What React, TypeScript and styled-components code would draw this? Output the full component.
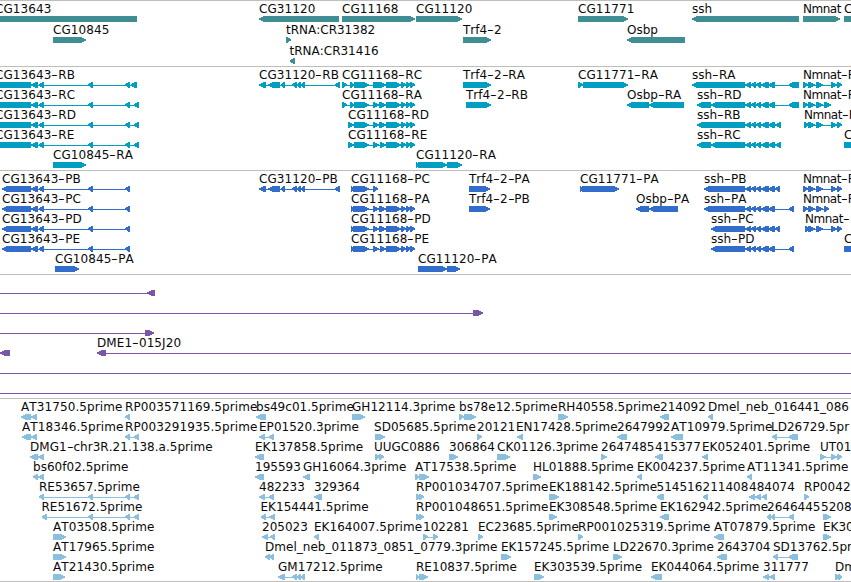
import styled, { createGlobalStyle } from "styled-components";

type Strand = '+' | '-';
type Span = [number, number];

interface Feature {
    label: string;
    strand: Strand;
    exons: Span[];
    labelAt?: number;
    line?: Span;
}

interface TrackData {
    name: string;
    color: string;
    pitch: number;
    gap: number;
    rows: Feature[][];
}

const GlobalStyle = createGlobalStyle`
    body {
        margin: 0;
        background: #fff;
        overflow: hidden;
    }
`

const Browser = styled.main`
    display: flex;
    flex-direction: column;
    width: 851px;
    height: 582px;
    overflow: hidden;
    background: #fff;
    color: #0a0a0a;
    font-family: "DejaVu Sans", sans-serif;
    font-size: 12px;
    line-height: 15px;
    font-kerning: none;
`

const TrackPanel = styled.section<{ $gap: number }>`
    flex: none;
    border-top: 1px solid #bebebe;
    padding-bottom: ${p => p.$gap}px;

    &:last-child {
        border-bottom: 1px solid #bebebe;
    }
`

const Row = styled.div<{ $pitch: number }>`
    position: relative;
    height: ${p => p.$pitch}px;
    padding-top: 15px;
    box-sizing: border-box;
`

const Label = styled.span<{ $spacing: number }>`
    position: absolute;
    top: 1px;
    white-space: pre;
    letter-spacing: ${p => p.$spacing}px;
`

const Hyphen = styled.span`
    display: inline-block;
    width: 6.8px;
    letter-spacing: 0;
    transform: scaleX(1.55);
    transform-origin: left center;
`

const Glyphs = styled.svg<{ $color: string }>`
    display: block;
    width: 851px;
    height: 6px;
    fill: ${p => p.$color};
    shape-rendering: crispEdges;
`

const f = (label: string, strand: Strand, ...exons: Span[]): Feature => ({ label, strand, exons });

// exon groups shared by several isoforms
const tail13643: Span[] = [[31, 38], [38.5, 44], [88, 93], [125, 130]];
const cg31120: Span[] = [[259, 265.5], [268, 280], [280.5, 285], [292, 297], [297, 301], [300.5, 305], [334.5, 340]];
const end11168: Span[] = [[386, 401], [401, 406], [406, 411], [410, 415]];
const sshMid: Span[] = [[745, 751], [751, 756], [756, 761], [761, 769], [768.5, 775]];
const nmnatMid: Span[] = [[808, 815], [816, 823]];
const nmnatEnd: Span[] = [[831, 837], [837, 842]];

const tracks: TrackData[] = [
    {
        name: 'genes',
        color: '#408d94',
        pitch: 21,
        gap: 2,
        rows: [
            [
                f('CG13643', '-', [-5, 137]),
                f('CG31120', '-', [259, 339]),
                f('CG11168', '+', [342, 415]),
                f('CG11120', '+', [416, 462]),
                f('CG11771', '+', [578, 628]),
                f('ssh', '-', [692, 799]),
                f('Nmnat', '+', [803, 840]),
                f('C', '+', [844, 870]),
            ],
            [
                f('CG10845', '+', [53, 86]),
                f('tRNA:CR31382', '+', [286, 291]),
                f('Trf4-2', '+', [463, 491]),
                f('Osbp', '-', [627, 685]),
            ],
            [f('tRNA:CR31416', '-', [289.5, 295])],
        ],
    },
    {
        name: 'transcripts',
        color: '#009fc1',
        pitch: 20,
        gap: 3,
        rows: [
            [
                f('CG13643-RB', '-', [-5, 31], ...tail13643, [130.5, 136.5]),
                f('CG31120-RB', '-', ...cg31120),
                f('CG11168-RC', '+', [342, 347], [350, 354], [354, 369], [373, 386], ...end11168),
                f('Trf4-2-RA', '+', [463, 491]),
                f('CG11771-RA', '+', [578, 583], [583, 628]),
                f('ssh-RA', '-', [692, 745], ...sshMid, [788.5, 799]),
                f('Nmnat-R', '+', [803, 808], ...nmnatMid, ...nmnatEnd),
            ],
            [
                f('CG13643-RC', '-', [-5, 31], ...tail13643, [133.5, 139]),
                f('CG11168-RA', '+', [342, 347], [350, 354], [354, 369], [373, 379], [379, 386], ...end11168),
                f('Trf4-2-RB', '+', [466, 491]),
                f('Osbp-RA', '-', [627, 649], [649, 684]),
                f('ssh-RD', '-', [697, 711], [711, 745], ...sshMid, [788.5, 799]),
                f('Nmnat-R', '+', [803, 808], ...nmnatMid, [824, 831]),
            ],
            [
                f('CG13643-RD', '-', [-5, 31], ...tail13643, [133.5, 139]),
                f('CG11168-RD', '+', [348, 354], [354, 369], [373, 379], [379, 386], ...end11168),
                f('ssh-RB', '-', [697, 745], ...sshMid, [775, 781]),
                f('Nmnat-R', '+', [804, 809], ...nmnatMid, ...nmnatEnd),
            ],
            [
                f('CG13643-RE', '-', [-5, 31], ...tail13643, [133.5, 139]),
                f('CG11168-RE', '+', [348, 354], [354, 369], [373, 379], [380, 386], ...end11168),
                f('ssh-RC', '-', [697, 711], [711, 745], ...sshMid, [775, 781]),
                f('C', '+', [844, 870]),
            ],
            [
                f('CG10845-RA', '+', [53, 86]),
                f('CG11120-RA', '+', [416, 419], [418, 447], [447, 462]),
            ],
        ],
    },
    {
        name: 'translations',
        color: '#326dcc',
        pitch: 20,
        gap: 3,
        rows: [
            [
                f('CG13643-PB', '-', [2, 31], ...tail13643),
                f('CG31120-PB', '-', ...cg31120),
                f('CG11168-PC', '+', [351, 354], [353, 369], [373, 378]),
                f('Trf4-2-PA', '+', [469, 490]),
                f('CG11771-PA', '+', [580, 583], [582, 619]),
                f('ssh-PB', '-', [704, 745], ...sshMid, [775, 780]),
                f('Nmnat-P', '+', [803, 808], ...nmnatMid, ...nmnatEnd),
            ],
            [
                f('CG13643-PC', '-', [2, 31], ...tail13643),
                f('CG11168-PA', '+', [351, 354], [353, 369], [373, 379], [379, 386], ...end11168),
                f('Trf4-2-PB', '+', [469, 490]),
                f('Osbp-PA', '-', [636, 649], [649, 678]),
                f('ssh-PA', '-', [704, 745], ...sshMid, [788.5, 794]),
                f('Nmnat-P', '+', [803, 808], ...nmnatMid, [824, 829]),
            ],
            [
                f('CG13643-PD', '-', [2, 31], ...tail13643),
                f('CG11168-PD', '+', [351, 354], [353, 369], [373, 379], [379, 386], ...end11168),
                f('ssh-PC', '-', [711, 745], ...sshMid, [775, 780]),
                f('Nmnat-', '+', [805, 810], ...nmnatMid, ...nmnatEnd),
            ],
            [
                f('CG13643-PE', '-', [2, 31], ...tail13643),
                f('CG11168-PE', '+', [351, 354], [353, 369], [373, 379], [380, 386], ...end11168),
                f('ssh-PD', '-', [711, 745], ...sshMid, [788.5, 794]),
                f('C', '+', [844, 870]),
            ],
            [
                f('CG10845-PA', '+', [55, 79]),
                f('CG11120-PA', '+', [418, 447], [447, 460]),
            ],
        ],
    },
    {
        name: 'bacs',
        color: '#7858a6',
        pitch: 20,
        gap: 3,
        rows: [
            [{ label: '', strand: '-', exons: [[147, 155]], line: [-10, 150] }],
            [{ label: '', strand: '+', exons: [[473, 483]], line: [-10, 475] }],
            [{ label: '', strand: '+', exons: [[145, 154]], line: [-10, 147] }],
            [
                f('', '-', [0, 10]),
                { label: 'DME1-015J20', strand: '-', exons: [[97, 106]], line: [100, 860] },
            ],
            [{ label: '', strand: '+', exons: [], line: [-10, 860] }],
            [{ label: '', strand: '+', exons: [], line: [-10, 860] }],
        ],
    },
    {
        name: 'ests',
        color: '#8abfdf',
        pitch: 20,
        gap: 2,
        rows: [
            [
                f('AT31750.5prime', '-', [21, 31], [31, 37]),
                f('RP003571169.5prime', '-', [125, 130]),
                f('bs49c01.5prime', '-', [256, 266]),
                f('GH12114.3prime', '+', [352, 364.5]),
                f('bs78e12.5prime', '+', [459, 464], [464, 476]),
                f('RH40558.5prime', '+', [558, 568]),
                f('214092', '-', [660, 669]),
                f('Dmel_neb_016441_086', '-', [708, 713]),
            ],
            [
                f('AT18346.5prime', '-', [22, 31], [31, 37]),
                f('RP003291935.5prime', '-', [125, 130], [133.5, 139]),
                f('EP01520.3prime', '-', [259, 265], [268.5, 274]),
                { ...f('SD05685.5prime', '+', [375, 385]), labelAt: 374 },
                f('20121', '+', [477, 482]),
                { ...f('EN17428.5prime', '-', [517, 523]), labelAt: 516 },
                f('2647992', '-', [617, 627]),
                f('AT10979.5prime', '-', [671, 683]),
                { ...f('LD26729.5pr', '-', [772, 777], [788.5, 798]), labelAt: 771 },
            ],
            [
                f('DMG1-chr3R.21.138.a.5prime', '-', [30, 38], [38, 44]),
                f('EK137858.5prime', '-', [255, 264]),
                { ...f('UUGC0886', '+', [375, 380], [379, 384]), labelAt: 374 },
                f('306864', '+', [449, 458]),
                f('CK01126.3prime', '+', [497, 510]),
                f('2647485', '+', [601, 607]),
                f('415377', '-', [655, 663]),
                f('EK052401.5prime', '-', [702, 708]),
                f('UT01', '+', [820, 826], [831, 837], [837, 842]),
            ],
            [
                f('bs60f02.5prime', '-', [33, 38], [38, 44]),
                f('195593', '-', [255, 264]),
                f('GH16064.3prime', '-', [303, 310]),
                f('AT17538.5prime', '+', [415, 419], [419, 429]),
                f('HL01888.5prime', '+', [533, 541]),
                f('EK004237.5prime', '-', [637, 642]),
                f('AT11341.5prime', '-', [747, 752]),
            ],
            [
                f('RE53657.5prime', '-', [39, 44], [88, 93], [125, 130], [133.5, 139]),
                f('482233', '-', [259, 265], [268.5, 274]),
                f('329364', '-', [314, 322]),
                f('RP001034707.5prime', '+', [416, 420], [419, 424]),
                f('EK188142.5prime', '+', [549, 559]),
                f('514516', '-', [656.5, 664]),
                f('211408', '-', [702.5, 708]),
                f('484074', '-', [749, 755], [755, 761], [762, 767]),
                f('RP0042', '+', [804, 809]),
            ],
            [
                f('RE51672.5prime', '-', [41.5, 47], [88, 93], [125, 130], [133.5, 139]),
                f('EK154441.5prime', '-', [260.5, 266], [269, 275]),
                f('RP001048651.5prime', '+', [416, 420], [419, 424]),
                f('EK308548.5prime', '+', [549, 557]),
                f('EK162942.5prime', '-', [660, 669]),
                f('2646445', '-', [767, 771], [771, 775], [788.5, 794]),
                { ...f('5208', '+', [823, 831]), labelAt: 821 },
            ],
            [
                f('AT03508.5prime', '+', [53, 66]),
                f('205023', '-', [262, 268], [270, 275]),
                f('EK164007.5prime', '-', [314, 319]),
                f('102281', '+', [423, 428], [433, 438]),
                f('EC23685.5prime', '+', [478, 483]),
                f('RP001025319.5prime', '+', [578, 583]),
                f('AT07879.5prime', '-', [714, 724]),
                f('EK30', '+', [823, 831]),
            ],
            [
                f('AT17965.5prime', '+', [53, 66]),
                f('Dmel_neb_011873_0851_0779.3prime', '-', [265, 270], [269, 274]),
                f('EK157245.5prime', '+', [501, 511]),
                f('LD22670.3prime', '+', [613, 622]),
                f('2643704', '-', [717, 727]),
                f('SD13762.5pr', '-', [773, 778], [788.5, 798]),
            ],
            [
                f('AT21430.5prime', '+', [53, 65]),
                f('GM17212.5prime', '-', [278, 285], [292, 297], [297, 301], [300.5, 305]),
                f('RE10837.5prime', '+', [416, 419], [419, 428]),
                f('EK303539.5prime', '+', [534, 544]),
                f('EK044064.5prime', '-', [651, 662]),
                f('311777', '-', [763, 769], [769, 775]),
                f('Dm', '+', [835, 839], [838, 842]),
            ],
        ],
    },
];

// Block with an arrow head on its downstream end
const exonPoints = ([start, end]: Span, strand: Strand) => {
    const head = Math.min(end - start - 1, 5);
    return strand === '-'
        ? `${start},3.6 ${start},2.4 ${start + head},0 ${end},0 ${end},6 ${start + head},6`
        : `${end},3.6 ${end},2.4 ${end - head},0 ${start},0 ${start},6 ${end - head},6`;
};

const spacingOf = (label: string) => {
    if (label.startsWith('Nmnat')) return -0.5;
    if (label.startsWith('AT') || label.startsWith('RP')) return 0.1;
    if (label.startsWith('CG') || label.startsWith('DME')) return 0.08;
    return label.endsWith('prime') ? 0.03 : 0;
};

const FeatureLabel = ({ feature }: { feature: Feature }) => {
    const parts = feature.label.split('-');

    return (
        <Label $spacing={spacingOf(feature.label)} style={{ left: feature.labelAt ?? feature.exons[0][0] }}>
            {parts.map((part, i) => (
                <span key={i}>{i > 0 && <Hyphen>-</Hyphen>}{part}</span>
            ))}
        </Label>
    );
};

const FeatureGlyph = ({ feature }: { feature: Feature }) => {
    const { exons, strand } = feature;
    const line = feature.line ?? [exons[0][0], exons[exons.length - 1][1]];

    return (
        <g>
            <rect x={line[0]} y={3} width={line[1] - line[0]} height={1} />
            {exons.map((exon, i) => (
                <polygon key={i} points={exonPoints(exon, strand)} />
            ))}
        </g>
    );
};

const Track = ({ track }: { track: TrackData }) => (
    <TrackPanel $gap={track.gap}>
        {track.rows.map((row, i) => (
            <Row key={i} $pitch={track.pitch}>
                {row.filter(item => item.label).map((item, j) => (
                    <FeatureLabel key={j} feature={item} />
                ))}
                <Glyphs $color={track.color}>
                    {row.map((item, j) => <FeatureGlyph key={j} feature={item} />)}
                </Glyphs>
            </Row>
        ))}
    </TrackPanel>
);

const App = () => (
    <>
        <GlobalStyle />
        <Browser>
            {tracks.map(track => <Track key={track.name} track={track} />)}
        </Browser>
    </>
);

export default App;
